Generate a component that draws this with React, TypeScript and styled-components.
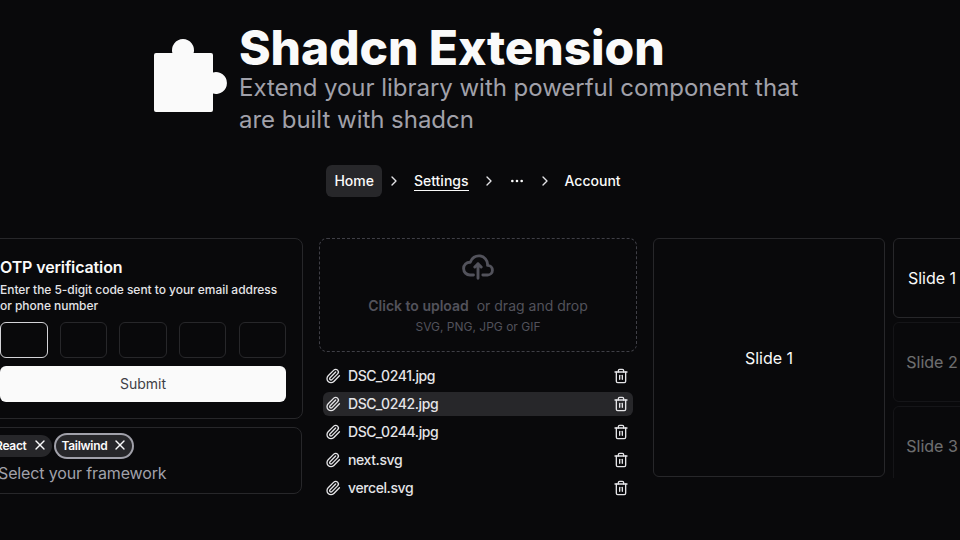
import styled, { createGlobalStyle } from 'styled-components';
import { ChevronRight, Ellipsis, Paperclip, Trash2, X } from 'lucide-react';

const GlobalStyle = createGlobalStyle`
  html, body {
    margin: 0;
    padding: 0;
    background: #09090b;
  }
  * {
    box-sizing: border-box;
  }
`;

const Page = styled.div`
  width: 960px;
  height: 540px;
  overflow: hidden;
  background: #09090b;
  color: #fafafa;
  font-family: Inter, "Liberation Sans", sans-serif;
`;

const Hero = styled.header`
  display: flex;
  align-items: flex-start;
  gap: 11px;
  height: 165px;
  padding: 24px 0 0 152px;
`;

const PuzzleLogo = styled.svg`
  width: 76px;
  height: 76px;
  margin-top: 14px;
  flex: none;
`;

const HeroText = styled.div`
  width: 580px;
`;

const Title = styled.h1`
  margin: 0;
  font-size: 48px;
  line-height: 48px;
  font-weight: 800;
  letter-spacing: -0.12px;
  color: #fafafa;
`;

const Subtitle = styled.p`
  margin: 0;
  font-size: 24px;
  line-height: 32px;
  font-weight: 400;
  letter-spacing: -0.03px;
  color: #a1a1aa;
`;

const Crumbs = styled.nav`
  display: flex;
  align-items: center;
  justify-content: center;
  height: 32px;
  padding-right: 5px;
  color: #fafafa;
  font-size: 14px;
  font-weight: 500;
`;

const Crumb = styled.span<{ $active?: boolean; $underline?: boolean }>`
  padding: 6px 8px;
  height: 32px;
  line-height: 20px;
  border-radius: 6px;
  background: ${({ $active }) => ($active ? '#27272a' : 'transparent')};
  span {
    display: inline-block;
    height: 20px;
    border-bottom: ${({ $underline }) => ($underline ? '1px solid #fafafa' : 'none')};
  }
`;

const Separator = styled(ChevronRight)`
  width: 16px;
  height: 16px;
  margin: 0 4px;
  color: #e4e4e7;
`;

const More = styled(Ellipsis)`
  width: 16px;
  height: 16px;
  margin: 0 8px;
`;

const Showcase = styled.main`
  display: flex;
  align-items: flex-start;
  width: 1200px;
  margin: 41px 0 0 -16px;
`;

const FormColumn = styled.section`
  display: flex;
  flex-direction: column;
  gap: 8px;
  width: 319px;
  flex: none;
`;

const OtpCard = styled.div`
  height: 181px;
  padding: 18px 16px 16px 15px;
  border: 1px solid #27272a;
  border-radius: 8px;
`;

const OtpTitle = styled.h2`
  margin: 0;
  font-size: 16px;
  line-height: 20px;
  font-weight: 600;
  letter-spacing: -0.13px;
`;

const OtpHint = styled.p`
  margin: 5px 0 0;
  font-size: 12px;
  line-height: 16px;
  font-weight: 500;
  letter-spacing: -0.04px;
  color: #e4e4e7;
`;

const OtpCells = styled.div`
  display: flex;
  justify-content: space-between;
  margin-top: 8px;
  width: 286px;
`;

const OtpCell = styled.div<{ $focused?: boolean }>`
  width: 47.5px;
  height: 36px;
  border-radius: 6px;
  border: 1px solid ${({ $focused }) => ($focused ? '#d4d4d8' : '#27272a')};
`;

const SubmitButton = styled.button`
  display: block;
  width: 286px;
  height: 36px;
  margin-top: 8px;
  padding: 0 0 2px;
  border: none;
  border-radius: 6px;
  background: #fafafa;
  color: #3f3f46;
  font-family: inherit;
  font-size: 14px;
  font-weight: 400;
`;

const TagsField = styled.div`
  height: 67px;
  padding: 7px 12px 0 4px;
  border: 1px solid #27272a;
  border-radius: 8px;
  width: 318px;
`;

const TagRow = styled.div`
  display: flex;
  gap: 4px;
`;

const Tag = styled.span<{ $focused?: boolean }>`
  display: inline-flex;
  align-items: center;
  gap: 5px;
  height: 22px;
  padding: 0 4px 2px 6px;
  border-radius: 11px;
  background: #27272a;
  font-size: 12px;
  font-weight: 600;
  letter-spacing: -0.3px;
  box-shadow: ${({ $focused }) => ($focused ? '0 0 0 2px #a1a1aa' : 'none')};
`;

const TagClose = styled(X)`
  width: 16px;
  height: 16px;
`;

const TagPlaceholder = styled.div`
  margin-top: 4px;
  padding-left: 9px;
  font-size: 16px;
  line-height: 24px;
  letter-spacing: -0.14px;
  color: #a1a1aa;
`;

const UploadColumn = styled.section`
  width: 318px;
  margin-left: 16px;
  flex: none;
`;

const DropZone = styled.div`
  display: flex;
  flex-direction: column;
  align-items: center;
  height: 114px;
  padding-top: 15px;
  border: 1px dashed #3f3f46;
  border-radius: 8px;
  color: #52525b;
`;

const UploadIcon = styled.svg`
  width: 32px;
  height: 26px;
`;

const DropLabel = styled.p`
  margin: 16px 0 0;
  font-size: 14px;
  line-height: 20px;
  white-space: pre;
  b {
    font-weight: 600;
  }
`;

const DropHint = styled.p`
  margin: 3px 0 0;
  font-size: 12px;
  line-height: 16px;
`;

const FileList = styled.ul`
  list-style: none;
  margin: 12px 0 0;
  padding: 0 4px;
`;

const FileRow = styled.li<{ $active?: boolean }>`
  display: flex;
  align-items: center;
  height: 24px;
  margin-bottom: 4px;
  padding: 0 4px 0 2px;
  border-radius: 6px;
  background: ${({ $active }) => ($active ? '#27272a' : 'transparent')};
  font-size: 14px;
  font-weight: 500;
  letter-spacing: -0.4px;
  color: #e4e4e7;
`;

const FileClip = styled(Paperclip)`
  width: 16px;
  height: 16px;
  margin-right: 7px;
`;

const FileName = styled.span`
  flex: 1;
  margin-bottom: 2px;
`;

const FileDelete = styled(Trash2)`
  width: 16px;
  height: 16px;
`;

const MainSlide = styled.div`
  display: flex;
  align-items: center;
  justify-content: center;
  width: 232px;
  height: 239px;
  margin-left: 16px;
  flex: none;
  border: 1px solid #27272a;
  border-radius: 6px;
  font-size: 16px;
  font-weight: 400;
`;

const ThumbColumn = styled.section`
  display: flex;
  flex-direction: column;
  gap: 4px;
  height: 240px;
  margin-left: 8px;
  overflow: hidden;
  flex: none;
`;

const Thumb = styled.div<{ $current?: boolean }>`
  display: flex;
  align-items: center;
  justify-content: center;
  flex: none;
  width: 78px;
  height: 80px;
  border: 1px solid #27272a;
  border-radius: 6px;
  font-size: 16px;
  color: #fafafa;
  opacity: ${({ $current }) => ($current ? 1 : 0.42)};
`;

const files = ['DSC_0241.jpg', 'DSC_0242.jpg', 'DSC_0244.jpg', 'next.svg', 'vercel.svg'];

export default function App() {
  return (
    <Page>
      <GlobalStyle />
      <Hero>
        <PuzzleLogo viewBox="0 0 76 76" aria-hidden="true">
          <path
            fill="#fafafa"
            d="M4 15H20.400A11 11 0 1 1 41.600 15H59a2 2 0 0 1 2 2V34.400A11 11 0 1 1 61 55.600V72a2 2 0 0 1-2 2H4a2 2 0 0 1-2-2V17a2 2 0 0 1 2-2Z"
          />
        </PuzzleLogo>
        <HeroText>
          <Title>Shadcn Extension</Title>
          <Subtitle>Extend your library with powerful component that are built with shadcn</Subtitle>
        </HeroText>
      </Hero>
      <Crumbs>
        <Crumb $active>Home</Crumb>
        <Separator />
        <Crumb $underline><span>Settings</span></Crumb>
        <Separator />
        <More />
        <Separator />
        <Crumb>Account</Crumb>
      </Crumbs>
      <Showcase>
        <FormColumn>
          <OtpCard>
            <OtpTitle>OTP verification</OtpTitle>
            <OtpHint>Enter the 5-digit code sent to your email address or phone number</OtpHint>
            <OtpCells>
              <OtpCell $focused />
              <OtpCell />
              <OtpCell />
              <OtpCell />
              <OtpCell />
            </OtpCells>
            <SubmitButton>Submit</SubmitButton>
          </OtpCard>
          <TagsField>
            <TagRow>
              <Tag>React<TagClose /></Tag>
              <Tag $focused>Tailwind<TagClose /></Tag>
            </TagRow>
            <TagPlaceholder>Select your framework</TagPlaceholder>
          </TagsField>
        </FormColumn>
        <UploadColumn>
          <DropZone>
            <UploadIcon viewBox="0 0 20 16" fill="none" stroke="currentColor" strokeWidth="1.8" strokeLinecap="round" strokeLinejoin="round">
              <path d="M13 13h3a3 3 0 0 0 0-6h-.025A5.56 5.56 0 0 0 16 6.5 5.5 5.500 0 0 0 5.207 5.021C5.137 5.017 5.071 5 5 5a4 4 0 0 0 0 8h2.167M10 15V6m0 0L8 8m2-2 2 2" />
            </UploadIcon>
            <DropLabel><b>Click to upload</b>{'  or drag and drop'}</DropLabel>
            <DropHint>SVG, PNG, JPG or GIF</DropHint>
          </DropZone>
          <FileList>
            {files.map((name, index) => (
              <FileRow key={name} $active={index === 1}>
                <FileClip />
                <FileName>{name}</FileName>
                <FileDelete />
              </FileRow>
            ))}
          </FileList>
        </UploadColumn>
        <MainSlide>Slide 1</MainSlide>
        <ThumbColumn>
          <Thumb $current>Slide 1</Thumb>
          <Thumb>Slide 2</Thumb>
          <Thumb>Slide 3</Thumb>
        </ThumbColumn>
      </Showcase>
    </Page>
  );
}
